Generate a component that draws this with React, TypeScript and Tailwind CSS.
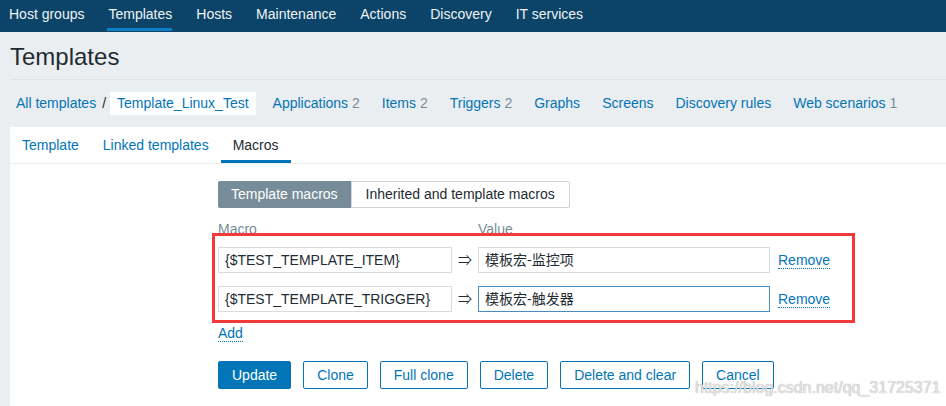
import { ReactNode } from 'react';

const navItems = ['Host groups', 'Templates', 'Hosts', 'Maintenance', 'Actions', 'Discovery', 'IT services'];

const crumbs: { label: string; count?: number }[] = [
  { label: 'Applications', count: 2 },
  { label: 'Items', count: 2 },
  { label: 'Triggers', count: 2 },
  { label: 'Graphs' },
  { label: 'Screens' },
  { label: 'Discovery rules' },
  { label: 'Web scenarios', count: 1 },
];

const tabs = ['Template', 'Linked templates', 'Macros'];

const macros = [
  { name: '{$TEST_TEMPLATE_ITEM}', value: '模板宏-监控项', focused: false },
  { name: '{$TEST_TEMPLATE_TRIGGER}', value: '模板宏-触发器', focused: true },
];

function Btn({ children, primary }: { children: ReactNode; primary?: boolean }) {
  return (
    <button
      className={`h-[28px] px-[13px] rounded-[2px] border text-[14px] ${
        primary ? 'bg-[#0275b8] border-[#0275b8] text-white' : 'bg-white border-[#0275b8] text-[#0275b8]'
      }`}
    >
      {children}
    </button>
  );
}

export default function App() {
  return (
    <div className="relative w-[946px] h-[406px] overflow-hidden flex flex-col bg-[#ebeef0] text-[14px] text-[#1f2c33] font-['Liberation_Sans','Noto_Sans_CJK_SC',sans-serif]">
      {/* top menu */}
      <nav className="h-[32px] shrink-0 bg-[#0b4468] flex pl-[9px] gap-[24px]">
        {navItems.map((item) => (
          <div key={item} className="relative h-full pt-[6px] leading-[16px] text-[#f0f3f5]">
            {item}
            {item === 'Templates' && (
              <span className="absolute -left-[1px] right-0 bottom-[1px] h-[3px] bg-[#0f7fc4]" />
            )}
          </div>
        ))}
      </nav>

      {/* page title */}
      <div className="ml-[10px] pt-[11px] pb-[8px] border-b border-[#dde2e5]">
        <h1 className="text-[24px] leading-[28px] text-[#1f2c33]">Templates</h1>
      </div>

      {/* breadcrumbs */}
      <div className="flex items-center pl-[16px] pt-[12px] pb-[12px]">
        <a className="text-[#0275b8] leading-[23px]">All templates</a>
        <span className="ml-[6px] text-[#1f2c33]">/</span>
        <span className="ml-[4px] h-[23px] px-[7px] bg-white text-[#0275b8] leading-[23px]">Template_Linux_Test</span>
        <div className="flex ml-[17px] gap-[22px]">
          {crumbs.map((c) => (
            <span key={c.label} className="text-[#0275b8] leading-[23px]">
              {c.label}
              {c.count !== undefined && <span className="text-[#768d99]"> {c.count}</span>}
            </span>
          ))}
        </div>
      </div>

      {/* panel */}
      <div className="flex-1 ml-[10px] bg-white">
        <div className="flex h-[37px] border-b border-[#ebeef0]">
          {tabs.map((t) => (
            <div
              key={t}
              className={`relative h-[36px] px-[12px] pt-[10px] leading-[17px] ${
                t === 'Macros' ? 'text-[#1f2c33]' : 'text-[#0275b8]'
              }`}
            >
              {t}
              {t === 'Macros' && <span className="absolute left-0 right-0 bottom-0 h-[3px] bg-[#0275b8]" />}
            </div>
          ))}
        </div>

        <div className="pl-[208px] pt-[17px]">
          {/* segmented control */}
          <div className="flex h-[27px]">
            <div className="px-[13px] bg-[#768d99] text-white leading-[27px] rounded-l-[2px]">Template macros</div>
            <div className="px-[14px] border border-[#cfd5d9] bg-white leading-[25px] rounded-r-[2px]">
              Inherited and template macros
            </div>
          </div>

          {/* macros table */}
          <div className="relative mt-[13px]">
            <div className="flex h-[17px] leading-[17px] text-[#768d99]">
              <span className="w-[260px]">Macro</span>
              <span>Value</span>
            </div>
            <div className="mt-[9px] flex flex-col gap-[13px]">
              {macros.map((m) => (
                <div key={m.name} className="flex items-center h-[26px]">
                  <div className="w-[234px] h-[26px] border border-[#d7dcdf] px-[6px] leading-[24px]">{m.name}</div>
                  <span className="w-[26px] text-center text-[#1f2c33]">⇒</span>
                  <div
                    className={`w-[292px] h-[26px] border px-[6px] leading-[24px] ${
                      m.focused ? 'border-[#4a8cc0]' : 'border-[#d7dcdf]'
                    }`}
                  >
                    {m.value}
                  </div>
                  <a className="ml-[8px] text-[#0275b8] leading-[16px] border-b border-dotted border-[#0275b8]">Remove</a>
                </div>
              ))}
            </div>
            <a className="inline-block mt-[13px] text-[#0275b8] leading-[16px] border-b border-dotted border-[#0275b8]">Add</a>

            {/* annotation frame */}
            <div className="absolute -left-[6px] top-[12px] w-[643px] h-[90px] border-[3px] border-[#f23a3a] pointer-events-none" />
          </div>

          {/* actions */}
          <div className="flex gap-[12px] mt-[17px]">
            <Btn primary>Update</Btn>
            <Btn>Clone</Btn>
            <Btn>Full clone</Btn>
            <Btn>Delete</Btn>
            <Btn>Delete and clear</Btn>
            <Btn>Cancel</Btn>
          </div>
        </div>
      </div>

      {/* watermark */}
      <span className="absolute left-[695px] top-[378px] text-[16px] leading-[20px] text-[#e4e4e4] [text-shadow:0_0_1px_#9a9a9a]">
        https://blog.csdn.net/qq_31725371
      </span>
    </div>
  );
}
